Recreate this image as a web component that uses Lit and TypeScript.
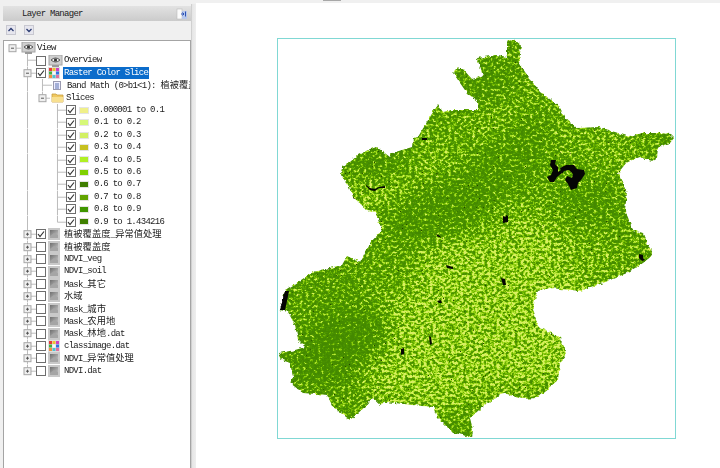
import { LitElement, html, css, svg } from 'lit';
import { customElement } from 'lit/decorators.js';

const ROW = 12.42;

type Row = {
  gutter: number;
  lines: [number, 'full' | 'half'][];
  from?: number;
  exp?: [number, boolean];
  check?: boolean;
  icon?: string;
  swatch?: string;
  label: string;
  selected?: boolean;
};

const layer = (label: string, check = false, icon = 'raster', last = false): Row => ({
  gutter: 32,
  lines: [[23.5, last ? 'half' : 'full']],
  from: 23.5,
  exp: [23.5, true],
  check,
  icon,
  label,
});

const slice = (label: string, swatch: string, last = false): Row => ({
  gutter: 62,
  lines: [[23.5, 'full'], [53.5, last ? 'half' : 'full']],
  from: 53.5,
  check: true,
  swatch,
  label,
});

const ROWS: Row[] = [
  { gutter: 17, lines: [], from: 8.5, exp: [8.5, false], icon: 'eye', label: 'View' },
  { gutter: 32, lines: [[23.5, 'full']], from: 23.5, check: false, icon: 'eye', label: 'Overview' },
  { gutter: 32, lines: [[23.5, 'full']], from: 23.5, exp: [23.5, false], check: true, icon: 'palette', label: 'Raster Color Slice', selected: true },
  { gutter: 48, lines: [[23.5, 'full'], [38.5, 'full']], from: 38.5, icon: 'band', label: 'Band Math (0>b1<1): 植被覆盖度' },
  { gutter: 46, lines: [[23.5, 'full'], [38.5, 'half']], from: 38.5, exp: [38.5, false], icon: 'folder', label: 'Slices' },
  slice('0.000001 to 0.1', '#f0f08a'),
  slice('0.1 to 0.2', '#d6f878'),
  slice('0.2 to 0.3', '#d2f064'),
  slice('0.3 to 0.4', '#c6c020'),
  slice('0.4 to 0.5', '#b0f024'),
  slice('0.5 to 0.6', '#7fd000'),
  slice('0.6 to 0.7', '#3f7d00'),
  slice('0.7 to 0.8', '#62a400'),
  slice('0.8 to 0.9', '#3f9600'),
  slice('0.9 to 1.434216', '#3f8000', true),
  layer('植被覆盖度_异常值处理', true),
  layer('植被覆盖度'),
  layer('NDVI_veg'),
  layer('NDVI_soil'),
  layer('Mask_其它'),
  layer('水域'),
  layer('Mask_城市'),
  layer('Mask_农用地'),
  layer('Mask_林地.dat'),
  layer('classimage.dat', false, 'palette'),
  layer('NDVI_异常值处理'),
  layer('NDVI.dat', false, 'raster', true),
];

const OUTLINE =
  '508,40 516,41 521,45 519,62 525,72 540,92 558,105 565,118 577,128 598,127 615,132 630,137 642,133 660,133 670,134 674,138 670,143 658,147 657,158 652,161 640,157 627,162 618,173 627,193 625,210 633,230 643,233 653,255 643,263 627,273 603,283 580,291 550,288 537,292 533,308 538,327 550,332 560,338 567,353 560,363 558,380 537,398 522,399 503,393 487,403 470,418 473,430 472,437 453,433 437,417 433,407 413,405 385,402 380,405 372,398 365,407 350,420 333,407 327,395 303,393 290,383 293,377 290,363 282,360 279,353 295,350 305,347 298,340 295,325 288,312 280,310 285,290 298,282 313,272 342,265 347,256 360,262 370,243 382,230 375,212 367,210 353,197 348,185 341,175 342,167 350,162 358,155 370,149 377,147 390,157 392,153 412,147 413,138 418,137 425,125 433,112 438,105 443,112 452,110 467,110 478,110 478,102 467,93 453,73 458,68 462,68 472,79 483,76 477,58 497,55 507,57 507,42';

// brightness map that drives the class colours: dark blobs are forest, light ones farmland
const BLOBS: [number, number, number, number, number, number][] = [
  [500, 300, 90, 90, 0, 0.82],
  [430, 350, 80, 60, 0, 0.82],
  [540, 350, 40, 40, 0, 0.85],
  [600, 250, 45, 20, -20, 0.62],
  [480, 210, 50, 30, 0, 0.62],
  [385, 190, 40, 12, -15, 0.88],
  [425, 165, 35, 12, -25, 0.72],
  [500, 115, 45, 10, -30, 0.7],
  [610, 150, 30, 12, 10, 0.66],
  [560, 135, 30, 14, 0, 0.55],
  [380, 165, 34, 14, 0, 0.12],
  [490, 85, 28, 20, 0, 0.18],
  [530, 140, 20, 30, 0, 0.2],
  [440, 210, 60, 28, -15, 0.16],
  [500, 170, 35, 28, 0, 0.22],
  [590, 205, 26, 18, 0, 0.16],
  [340, 345, 52, 30, -30, 0.02],
  [325, 375, 32, 14, 0, 0.08],
  [330, 290, 30, 12, -20, 0.25],
  [620, 235, 14, 12, 0, 0.25],
];

const BLACK = [
  'M560 168l6-3 8 0 3 4 7 1 1 4-4 6-3 3-1 5-6 2-3-6-3-4 2-4 5 2 1-4-4-4-5 1-2 3z',
  'M551 160l5 0-1 4 3 3 0 5 3-2 1 3-5 4-3 5-4 0-3-5 4-2 2-5-3-5z',
  'M285 291l4 0-2 10-2 9-5 0 1-9z',
  'M422 138h5v2h-5z',
  'M503 216l3 1 0-2 2 1 0 6-5 1z',
  'M639 254l4 1 0 3 2 2-3 1-3-3z',
  'M501 278l4 1 1 6-3 0z',
  'M401 349l3-1 0 6-3 1z',
  'M429 336l2 1 1 7-2 1z',
  'M446 265l7 2 0 2-6-1z',
  'M436 234l4 2 1 2-4-2z',
  'M437 301l4-1 1 3-3 0z',
  'M366 185l4 3 5 1 4-2 6-1 0 2-6 0-4 3-5-1-4-4z',
  'M353 197l2 2 0 3-2-2z',
];

const runs = (text: string) =>
  text.split(/([\u4e00-\u9fff]+)/).map((part, i) => (i % 2 ? html`<span class="cjk">${part}</span>` : part));

const icons: Record<string, () => unknown> = {
  eye: () => svg`<svg class="icon-eye" width="15" height="12" viewBox="0 0 15 12">
    <rect x="1" y="0" width="13" height="10" fill="#cfcfcf" stroke="#a4a4a4"/>
    <rect x="4" y="10" width="7" height="2" fill="#9a9a9a"/>
    <path d="M3 5q4.500-4 9 0q-4.500 4-9 0z" fill="#f4f4f4" stroke="#555"/>
    <circle cx="7.500" cy="5" r="1.600" fill="#333"/>
  </svg>`,
  raster: () => svg`<svg class="icon" width="12" height="12" viewBox="0 0 12 12">
    <defs><linearGradient id="g" x1="0" y1="0" x2="1" y2="1">
      <stop offset="0" stop-color="#6f6f6f"/><stop offset="1" stop-color="#cdcdcd"/>
    </linearGradient></defs>
    <rect width="12" height="12" fill="#c9c9c9"/>
    <rect x="2" y="2" width="8" height="8" fill="url(#g)"/>
    <path d="M2 8l4-3 4 2v3H2z" fill="#a5a5a5"/>
  </svg>`,
  palette: () => svg`<svg class="icon" width="12" height="12" viewBox="0 0 12 12">
    <rect width="12" height="12" fill="#ddd"/>
    <rect x="1" y="1" width="3" height="3" fill="#e63a3a"/><rect x="4.500" y="1" width="3" height="3" fill="#f0c030"/><rect x="8" y="1" width="3" height="3" fill="#d040c0"/>
    <rect x="1" y="4.500" width="3" height="3" fill="#40b040"/><rect x="4.500" y="4.500" width="3" height="3" fill="#fafafa"/><rect x="8" y="4.500" width="3" height="3" fill="#3070e0"/>
    <rect x="1" y="8" width="3" height="3" fill="#f09040"/><rect x="4.500" y="8" width="3" height="3" fill="#50c0d0"/><rect x="8" y="8" width="3" height="3" fill="#e070a0"/>
  </svg>`,
  band: () => svg`<svg class="icon-band" width="8" height="9" viewBox="0 0 8 9">
    <rect x=".5" y=".5" width="7" height="8" fill="#eef" stroke="#9a9ab0"/>
    <path d="M2 3h4M2 5h4M2 7h4" stroke="#5a70b0"/>
  </svg>`,
  folder: () => svg`<svg class="icon-folder" width="13" height="11" viewBox="0 0 13 11">
    <path d="M1 2h4l1 1h6v7H1z" fill="#f0c860" stroke="#c8a040" stroke-width=".8"/>
    <path d="M1 5h11v5H1z" fill="#f8e090"/>
  </svg>`,
};

const gutter = (row: Row) => svg`<svg class="gutter" width=${row.gutter} height=${ROW} viewBox="0 0 ${row.gutter} ${ROW}">
  ${row.lines.map(([x, mode]) => svg`<line x1=${x} x2=${x} y1="0" y2=${mode === 'half' ? ROW / 2 : ROW} class="tree-line"/>`)}
  ${row.from !== undefined
    ? svg`<line x1=${row.from} x2=${row.gutter} y1=${ROW / 2} y2=${ROW / 2} class="tree-line"/>`
    : null}
  ${row.exp
    ? svg`<g transform="translate(${row.exp[0] - 3.5} ${ROW / 2 - 3.5})">
        <rect x="0" y="0" width="7" height="7" fill="#efefef" stroke="#a6a6a6"/>
        <path d=${row.exp[1] ? 'M2 3.500h3M3.500 2v3' : 'M2 3.500h3'} stroke="#555" fill="none"/>
      </g>`
    : null}
</svg>`;

const checkbox = (on: boolean) => svg`<svg class="check" width="10" height="10" viewBox="0 0 10 10">
  <rect x=".5" y=".5" width="9" height="9" fill="#fff" stroke="#6e6e6e"/>
  ${on ? svg`<path d="M2 5l2 2.500 4-5" fill="none" stroke="#333" stroke-width="1.200"/>` : null}
</svg>`;

@customElement('app-root')
export class AppRoot extends LitElement {
  static styles = css`
    :host {
      display: block;
      width: 720px;
      height: 468px;
      overflow: hidden;
      background: #f0f0f0;
      font-family: 'Liberation Mono', monospace;
      color: #222;
    }
    .top {
      height: 3px;
      display: flex;
    }
    .top-tab {
      width: 18px;
      height: 1px;
      margin-left: 323px;
      background: #a8a8a8;
    }
    .main {
      display: flex;
      height: 465px;
    }
    .panel {
      width: 188px;
      padding-left: 3px;
      display: flex;
      flex-direction: column;
    }
    .header {
      margin-top: 3px;
      height: 15px;
      display: flex;
      align-items: center;
      justify-content: space-between;
      padding: 0 4px 0 19px;
      background: linear-gradient(#e2e2e2, #cbcbcb);
      font-size: 9px;
      letter-spacing: -0.73px;
    }
    .tools {
      display: flex;
      gap: 8px;
      padding: 4px 0 0 3px;
      box-sizing: border-box;
      height: 19px;
    }
    .tool {
      width: 10px;
      height: 10px;
      background: #e6e6ee;
      border: 1px solid #c8c8d0;
      box-sizing: border-box;
      display: flex;
    }
    .tree {
      flex: 1;
      min-height: 0;
      background: #fff;
      border: 1px solid #a4a4a4;
      border-bottom: 0;
      padding-top: 1px;
      overflow: hidden;
      filter: blur(0.25px);
    }
    .row {
      height: 12.42px;
      display: flex;
      align-items: center;
      white-space: nowrap;
      font-size: 9px;
      line-height: 12.42px;
      letter-spacing: -0.73px;
    }
    .gutter {
      flex: none;
      display: block;
    }
    .tree-line {
      stroke: #bcbcbc;
      stroke-width: 1;
    }
    .check {
      flex: none;
      margin-right: 2px;
    }
    .icon {
      flex: none;
      margin: 0 3px 0 0;
    }
    .icon-eye {
      flex: none;
      margin-right: 0;
    }
    .icon-band {
      flex: none;
      margin: 0 5px 0 1px;
    }
    .icon-folder {
      flex: none;
      margin-right: 1px;
      margin-left: 1px;
    }
    .swatch {
      flex: none;
      width: 10px;
      height: 7px;
      margin: 0 4px 0 1px;
      border: 1px solid #e4e4e4;
      box-sizing: border-box;
    }
    .label {
      padding: 0 1px;
    }
    .selected {
      background: #0b6ccb;
      color: #fff;
    }
    .cjk {
      font-family: 'Noto Sans CJK SC', sans-serif;
      font-size: 9.3px;
      letter-spacing: 0;
    }
    .split {
      width: 5px;
      margin-top: 1px;
      background: linear-gradient(90deg, #c4c4c4, #e6e6e6 30%, #eeeeee);
    }
    .canvas {
      flex: 1;
      background: #fff;
      padding: 35px 0 0 81px;
    }
    .frame {
      width: 397px;
      height: 399px;
      border: 1px solid #80d8d4;
    }
    .frame svg {
      display: block;
      filter: blur(0.5px);
    }
  `;

  renderRow(row: Row) {
    return html`<div class="row">
      ${gutter(row)}
      ${row.check !== undefined ? checkbox(row.check) : null}
      ${row.swatch ? html`<span class="swatch" style="background:${row.swatch}"></span>` : null}
      ${row.icon ? icons[row.icon]() : null}
      <span class="label ${row.selected ? 'selected' : ''}">${runs(row.label)}</span>
    </div>`;
  }

  renderMap() {
    return svg`<svg width="397" height="399" viewBox="278 39 397 399">
      <defs>
        <filter id="veg" x="0" y="0" width="100%" height="100%" color-interpolation-filters="sRGB">
          <feGaussianBlur in="SourceGraphic" stdDeviation="12" result="region"/>
          <feTurbulence type="fractalNoise" baseFrequency="0.33 0.37" numOctaves="3" seed="11" result="noise"/>
          <feColorMatrix in="noise" type="matrix" values="1 0 0 0 0 1 0 0 0 0 1 0 0 0 0 0 0 0 0 1" result="grey"/>
          <feComposite in="region" in2="grey" operator="arithmetic" k1="0" k2="0.62" k3="2" k4="-0.85" result="value"/>
          <feComponentTransfer in="value">
            <feFuncR type="discrete" tableValues="0.27 0.28 0.29 0.3 0.35 0.44 0.55 0.66 0.75 0.85"/>
            <feFuncG type="discrete" tableValues="0.54 0.56 0.57 0.58 0.64 0.72 0.8 0.87 0.92 0.94"/>
            <feFuncB type="discrete" tableValues="0 0 0 0 0 0 0.06 0.16 0.25 0.38"/>
            <feFuncA type="linear" slope="0" intercept="1"/>
          </feComponentTransfer>
        </filter>
        <filter id="specks" x="0" y="0" width="100%" height="100%" color-interpolation-filters="sRGB">
          <feTurbulence type="fractalNoise" baseFrequency="0.47 0.53" numOctaves="2" seed="23"/>
          <feColorMatrix type="matrix" values="0 0 0 0 0.14 0 0 0 0 0.26 0 0 0 0 0 14 0 0 0 -10.800"/>
        </filter>
        <filter id="rough" x="-5%" y="-5%" width="110%" height="110%">
          <feTurbulence type="fractalNoise" baseFrequency="0.28" numOctaves="2" seed="4"/>
          <feDisplacementMap in="SourceGraphic" scale="4" xChannelSelector="R" yChannelSelector="G"/>
        </filter>
        <mask id="shape" maskUnits="userSpaceOnUse" x="278" y="39" width="397" height="399">
          <polygon points=${OUTLINE} fill="#fff" filter="url(#rough)"/>
        </mask>
      </defs>
      <g mask="url(#shape)">
        <g filter="url(#veg)">
          <rect x="278" y="39" width="397" height="399" fill="#707070"/>
          ${BLOBS.map(([cx, cy, rx, ry, rot, v]) => {
            const g = Math.round(v * 255);
            return svg`<ellipse cx=${cx} cy=${cy} rx=${rx} ry=${ry} transform="rotate(${rot} ${cx} ${cy})" fill="rgb(${g},${g},${g})"/>`;
          })}
        </g>
        <rect x="278" y="39" width="397" height="399" filter="url(#specks)"/>
        ${BLACK.map((d) => svg`<path d=${d} fill="#050505"/>`)}
      </g>
    </svg>`;
  }

  render() {
    return html`
      <div class="top"><span class="top-tab"></span></div>
      <div class="main">
        <div class="panel">
          <div class="header">
            <span>Layer Manager</span>
            <svg width="11" height="12" viewBox="0 0 11 12">
              <rect x="1" y="1" width="5" height="10" fill="#fbfbfb" stroke="#bbb" stroke-width=".6"/>
              <rect x="6" y="3" width="5" height="8" fill="#b8c8ec"/>
              <path d="M5 6h3M6.500 4.500L8 6 6.500 7.500M9.500 3.500v5" fill="none" stroke="#2c52b4"/>
            </svg>
          </div>
          <div class="tools">
            <span class="tool">
              <svg width="8" height="8" viewBox="0 0 8 8"><path d="M1.500 5L4 2.500 6.500 5" fill="none" stroke="#2a3a70" stroke-width="1.300"/></svg>
            </span>
            <span class="tool">
              <svg width="8" height="8" viewBox="0 0 8 8"><path d="M1.500 3L4 5.500 6.500 3" fill="none" stroke="#2a3a70" stroke-width="1.300"/></svg>
            </span>
          </div>
          <div class="tree">${ROWS.map((row) => this.renderRow(row))}</div>
        </div>
        <div class="split"></div>
        <div class="canvas">
          <div class="frame">${this.renderMap()}</div>
        </div>
      </div>
    `;
  }
}
